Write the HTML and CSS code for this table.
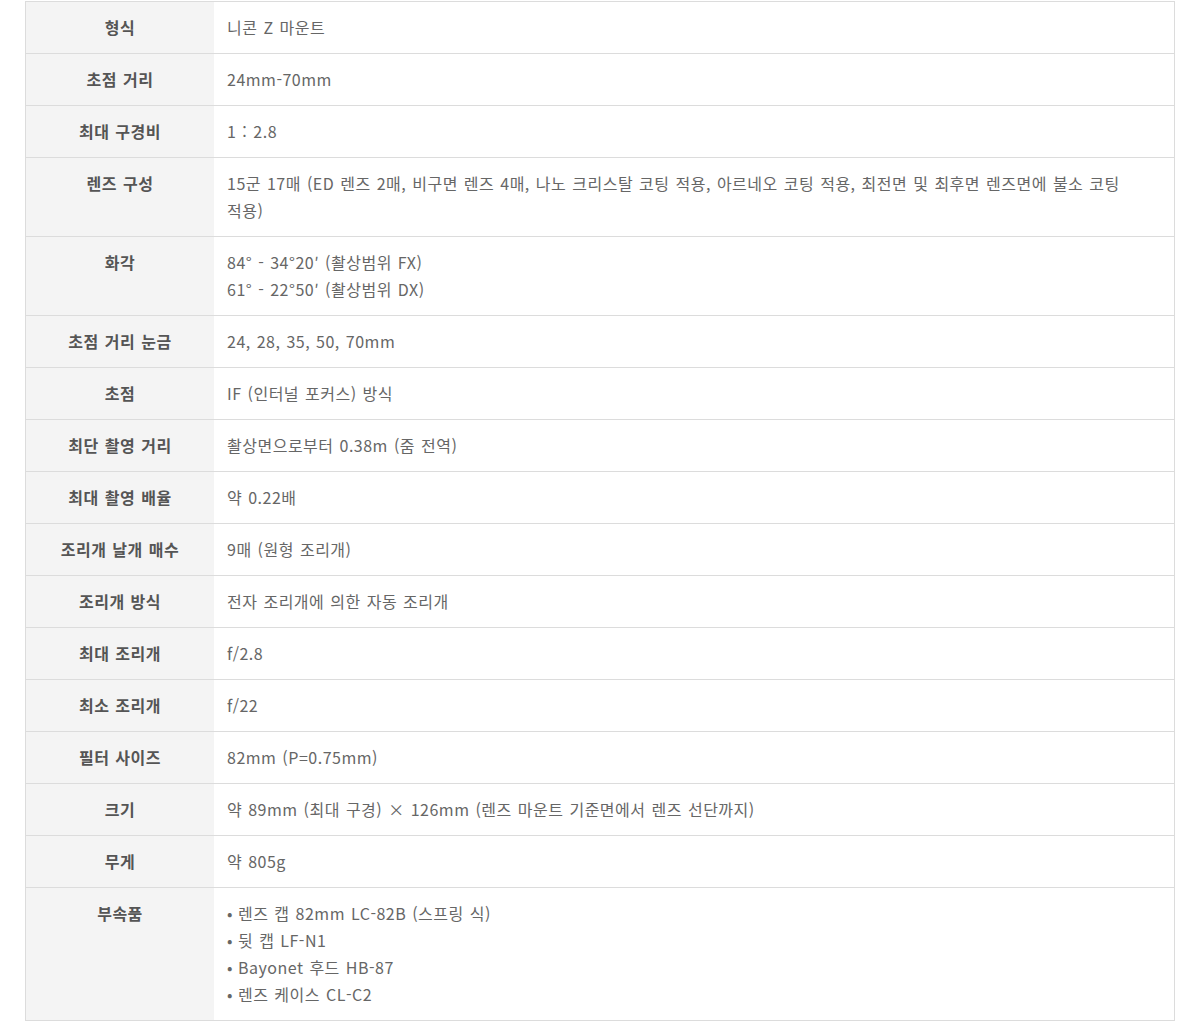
FILE: index.html
```html
<!DOCTYPE html>
<html lang="ko">
<head>
<meta charset="utf-8">
<link rel="stylesheet" href="styles.css">
</head>
<body>
<div class="wrap">
<table class="spec">
<tbody>
<tr><th>형식</th><td>니콘 Z 마운트</td></tr>
<tr><th>초점 거리</th><td>24mm-70mm</td></tr>
<tr><th>최대 구경비</th><td>1 : 2.8</td></tr>
<tr><th>렌즈 구성</th><td>15군 17매 (ED 렌즈 2매, 비구면 렌즈 4매, 나노 크리스탈 코팅 적용, 아르네오 코팅 적용, 최전면 및 최후면 렌즈면에 불소 코팅 적용)</td></tr>
<tr><th>화각</th><td>84° - 34°20′ (촬상범위 FX)<br>61° - 22°50′ (촬상범위 DX)</td></tr>
<tr><th>초점 거리 눈금</th><td>24, 28, 35, 50, 70mm</td></tr>
<tr><th>초점</th><td>IF (인터널 포커스) 방식</td></tr>
<tr><th>최단 촬영 거리</th><td>촬상면으로부터 0.38m (줌 전역)</td></tr>
<tr><th>최대 촬영 배율</th><td>약 0.22배</td></tr>
<tr><th>조리개 날개 매수</th><td>9매 (원형 조리개)</td></tr>
<tr><th>조리개 방식</th><td>전자 조리개에 의한 자동 조리개</td></tr>
<tr><th>최대 조리개</th><td>f/2.8</td></tr>
<tr><th>최소 조리개</th><td>f/22</td></tr>
<tr><th>필터 사이즈</th><td>82mm (P=0.75mm)</td></tr>
<tr><th>크기</th><td>약 89mm (최대 구경) × 126mm (렌즈 마운트 기준면에서 렌즈 선단까지)</td></tr>
<tr><th>무게</th><td>약 805g</td></tr>
<tr><th>부속품</th><td>
<ul class="items">
<li>렌즈 캡 82mm LC-82B (스프링 식)</li>
<li>뒷 캡 LF-N1</li>
<li>Bayonet 후드 HB-87</li>
<li>렌즈 케이스 CL-C2</li>
</ul>
</td></tr>
</tbody>
</table>
</div>
</body>
</html>
```
FILE: styles.css
```css
html, body {
  margin: 0;
  padding: 0;
  background: #fff;
}
body {
  font-family: "Noto Sans CJK KR", "Noto Sans", sans-serif;
  font-size: 16px;
  letter-spacing: 0.5px;
  word-spacing: 1px;
  color: #666;
}
.wrap {
  padding: 1px 25px 0 25px;
}
.spec {
  width: 100%;
  border-collapse: collapse;
  border: 1px solid #dcdcdc;
}
.spec th,
.spec td {
  border-top: 1px solid #dcdcdc;
  vertical-align: top;
  line-height: 27px;
  padding: 12px 13px 12px 13px;
}
.spec th {
  width: 162px;
  background: #f4f4f4;
  color: #555;
  font-weight: bold;
  text-align: center;
}
.spec td {
  text-align: left;
  word-break: keep-all;
}
.items {
  list-style: none;
  margin: 0;
  padding: 0;
}
.items li::before {
  content: "•";
  margin-right: 5px;
}
```
